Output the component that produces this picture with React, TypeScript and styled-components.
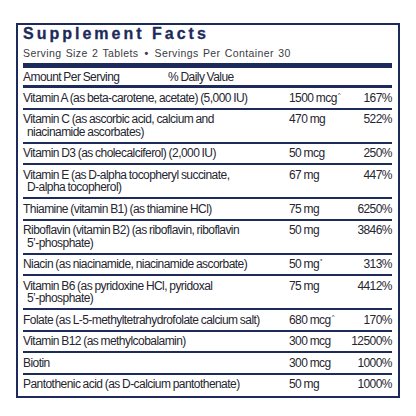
import React from 'react'
import styled, { createGlobalStyle } from 'styled-components'

const GlobalStyle = createGlobalStyle`
  html, body {
    margin: 0;
    padding: 0;
    background: #ffffff;
  }
  body {
    font-family: "Liberation Sans", Arial, sans-serif;
  }
`

const navy = '#1d2a5c'
const ink = '#262630'

const Page = styled.div`
  width: 416px;
  height: 416px;
  padding: 23px 16px 0 16px;
  box-sizing: border-box;
`

const Panel = styled.div`
  border: 2px solid ${navy};
  padding: 0 6px 2px 5px;
  box-sizing: border-box;
  width: 384px;
`

const Title = styled.div`
  font-weight: 700;
  font-size: 16px;
  line-height: 18px;
  letter-spacing: 3px;
  color: ${navy};
  -webkit-text-stroke: 0.3px ${navy};
`

const Serving = styled.div`
  font-size: 10.5px;
  line-height: 13px;
  letter-spacing: 0.4px;
  color: #3a3a44;
  margin-top: 4px;
  word-spacing: 1px;
`

const Dot = styled.span`
  margin: 0 6px;
  font-weight: 700;
`

const Bar = styled.div<{ $h: number; $gap?: number }>`
  height: ${(p) => p.$h}px;
  margin-top: ${(p) => p.$gap ?? 0}px;
  background: ${navy};
`

const condensed = `
  font-size: 12px;
  letter-spacing: -0.55px;
  word-spacing: -0.5px;
`

const HeadRow = styled.div`
  display: flex;
  ${condensed}
  line-height: 16px;
  color: ${ink};
  padding-top: 1px;
`

const HeadLabel = styled.span`
  width: 145px;
`

const Row = styled.div<{ $last?: boolean }>`
  display: grid;
  grid-template-columns: 266px 1fr auto;
  ${condensed}
  line-height: 12.5px;
  color: ${ink};
  padding: 3.5px 0;
  border-bottom: ${(p) => (p.$last ? 'none' : `2px solid ${navy}`)};
`

const Name = styled.div`
  white-space: nowrap;
`

const Cont = styled.div`
  padding-left: 4px;
`

const Amount = styled.div``

const Pct = styled.div`
  text-align: right;
`

const Mark = styled.sup`
  font-size: 6px;
  line-height: 0;
  vertical-align: 5px;
  margin-left: 1px;
`

type Nutrient = { name: string[]; amount: string; mark?: string; pct: string }

const nutrients: Nutrient[] = [
  { name: ['Vitamin A (as beta-carotene, acetate) (5,000 IU)'], amount: '1500 mcg', mark: '^', pct: '167%' },
  { name: ['Vitamin C (as ascorbic acid, calcium and', 'niacinamide ascorbates)'], amount: '470 mg', pct: '522%' },
  { name: ['Vitamin D3 (as cholecalciferol) (2,000 IU)'], amount: '50 mcg', pct: '250%' },
  { name: ['Vitamin E (as D-alpha tocopheryl succinate,', 'D-alpha tocopherol)'], amount: '67 mg', pct: '447%' },
  { name: ['Thiamine (vitamin B1) (as thiamine HCl)'], amount: '75 mg', pct: '6250%' },
  { name: ['Riboflavin (vitamin B2) (as riboflavin, riboflavin', '5\u2019-phosphate)'], amount: '50 mg', pct: '3846%' },
  { name: ['Niacin (as niacinamide, niacinamide ascorbate)'], amount: '50 mg', mark: '*', pct: '313%' },
  { name: ['Vitamin B6 (as pyridoxine HCl, pyridoxal', '5\u2019-phosphate)'], amount: '75 mg', pct: '4412%' },
  { name: ['Folate (as L-5-methyltetrahydrofolate calcium salt)'], amount: '680 mcg', mark: '^', pct: '170%' },
  { name: ['Vitamin B12 (as methylcobalamin)'], amount: '300 mcg', pct: '12500%' },
  { name: ['Biotin'], amount: '300 mcg', pct: '1000%' },
  { name: ['Pantothenic acid (as D-calcium pantothenate)'], amount: '50 mg', pct: '1000%' },
]

const App = () => {
  return (
    <>
      <GlobalStyle />
      <Page>
        <Panel>
          <Title>Supplement Facts</Title>
          <Serving>
            Serving Size 2 Tablets<Dot>•</Dot>Servings Per Container 30
          </Serving>
          <Bar $h={5} $gap={3} />
          <HeadRow>
            <HeadLabel>Amount Per Serving</HeadLabel>
            <span>% Daily Value</span>
          </HeadRow>
          <Bar $h={3} />
          {nutrients.map((n, i) => (
            <Row key={n.name[0]} $last={i === nutrients.length - 1}>
              <Name>
                {n.name.map((line, j) =>
                  j === 0 ? <div key={j}>{line}</div> : <Cont key={j}>{line}</Cont>
                )}
              </Name>
              <Amount>
                {n.amount}
                {n.mark && <Mark>{n.mark}</Mark>}
              </Amount>
              <Pct>{n.pct}</Pct>
            </Row>
          ))}
        </Panel>
      </Page>
    </>
  )
}

export default App
